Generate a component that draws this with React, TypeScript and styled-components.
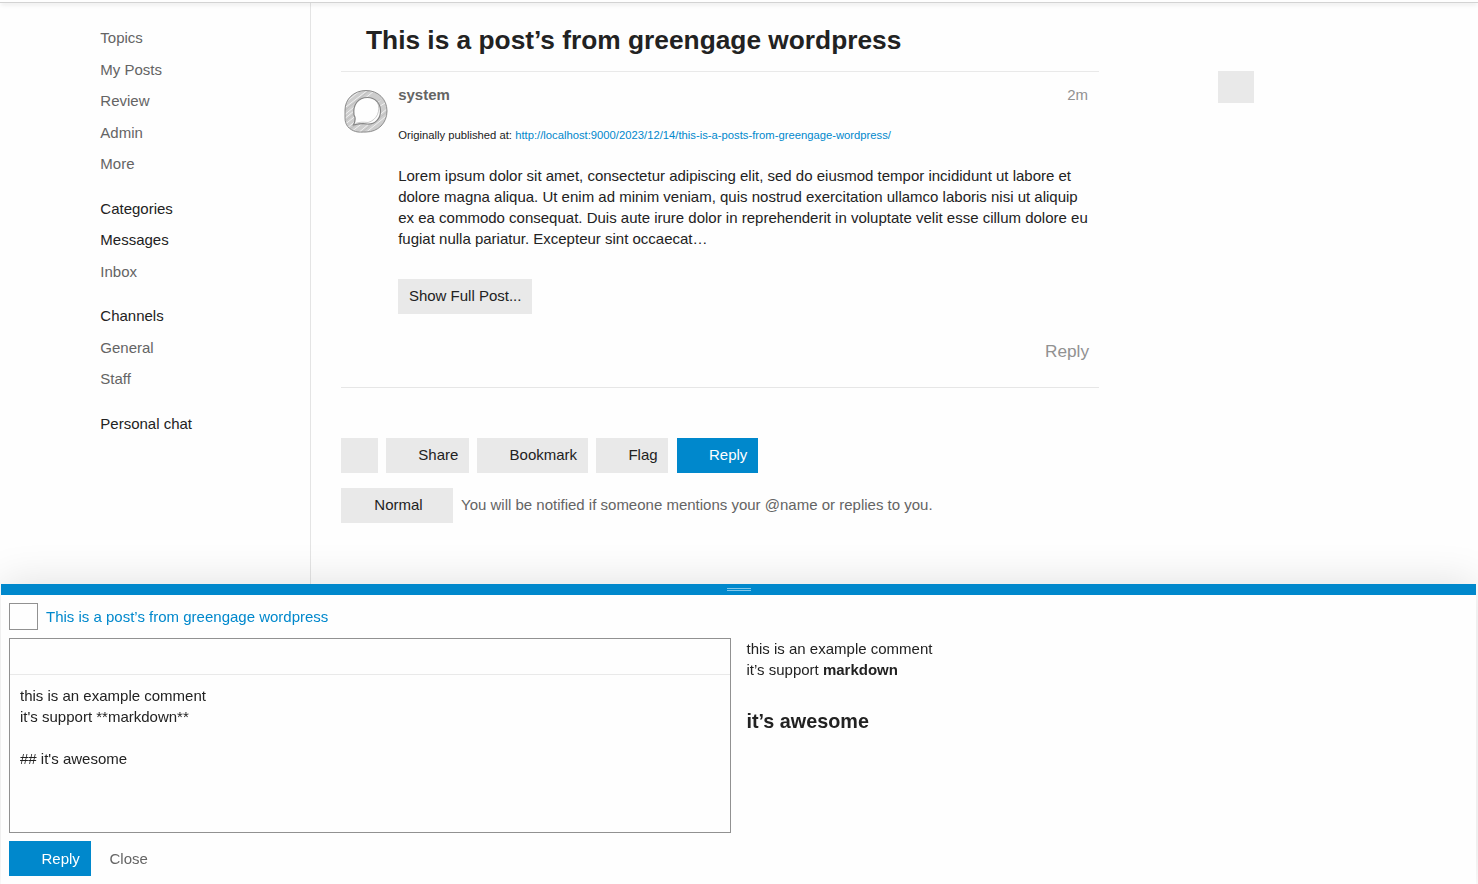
import React from "react";
import styled, { createGlobalStyle } from "styled-components";

const GlobalStyle = createGlobalStyle`
  *, *::before, *::after { box-sizing: border-box; }
  body {
    margin: 0;
    background: #fefefe;
    color: #222;
    font: 15px/21px "Liberation Sans", Arial, sans-serif;
    overflow: hidden;
  }
  h1, h2, p { margin: 0; }
  a { color: #0088cc; text-decoration: none; }
`;

const Page = styled.div`
  height: 884px;
  display: flex;
  flex-direction: column;
`;

const Header = styled.header`
  flex: none;
  height: 3px;
  background: #fefefe;
  box-shadow: 0 2px 4px -1px rgba(0, 0, 0, 0.25);
  border-bottom: 1px solid #d3d3d3;
  position: relative;
  z-index: 1;
`;

const Body = styled.div`
  flex: 1;
  display: grid;
  grid-template-columns: 311px 1fr;
`;

const Sidebar = styled.nav`
  border-right: 1px solid #e4e4e4;
  padding: 19px 0 0 100.3px;
`;

const NavGroup = styled.div<{ $flush?: boolean }>`
  margin-bottom: ${(p) => (p.$flush ? 0 : "13.2px")};
`;

const NavItem = styled.div<{ $heading?: boolean }>`
  height: 31.5px;
  line-height: 31.5px;
  color: ${(p) => (p.$heading ? "#222" : "#646464")};
`;

const Main = styled.main`
  padding-left: 30px;
  display: flex;
`;

const Column = styled.div`
  width: 758px;
`;

const Title = styled.h1`
  height: 68px;
  padding: 19px 0 0 25px;
  font-size: 26.3px;
  line-height: 36px;
`;

const Post = styled.article`
  display: grid;
  grid-template-columns: 57.2px 1fr;
  height: 317px;
  border-top: 1px solid #e9e9e9;
  border-bottom: 1px solid #e6e6e6;
`;

const Avatar = styled.svg`
  width: 45px;
  height: 45px;
  margin: 17px 0 0 2px;
`;

const PostContent = styled.div`
  padding: 12px 10px 0 0;
  display: flex;
  flex-direction: column;
  align-items: flex-start;
`;

const Meta = styled.div`
  align-self: stretch;
  display: flex;
  justify-content: space-between;
  padding-right: 1px;
  color: #919191;

  b { color: #646464; }
`;

const Source = styled.p`
  margin-top: 20px;
  font-size: 11.25px;
  line-height: 20px;
`;

const Excerpt = styled.p`
  margin-top: 20px;
  white-space: nowrap;
`;

const Button = styled.button<{ $primary?: boolean; $width: number; $indent?: number; $drop?: boolean }>`
  flex: none;
  width: ${(p) => p.$width}px;
  height: 35px;
  padding: 0 0 ${(p) => (p.$drop ? 0 : 2)}px ${(p) => p.$indent ?? 32.3}px;
  border: 0;
  text-align: left;
  white-space: nowrap;
  font: inherit;
  line-height: 20px;
  color: ${(p) => (p.$primary ? "#fff" : "#222")};
  background: ${(p) => (p.$primary ? "#0088cc" : "#e9e9e9")};
`;

const ExpandSlot = styled.div`
  margin-top: 30px;
  height: 35px;
`;

const PostReply = styled.span`
  align-self: flex-end;
  margin-top: 27px;
  color: #919191;
  font-size: 17.23px;
`;

const Actions = styled.div`
  display: flex;
  gap: 8px;
  margin-top: 50px;

  button:last-child { margin-left: 1px; }
`;

const Notifications = styled.div`
  display: flex;
  align-items: center;
  gap: 8px;
  margin-top: 15px;
  color: #646464;

  span { padding-bottom: 2px; }
`;

const TimelineButton = styled.div`
  width: 36px;
  height: 32px;
  margin: 68px 0 0 119px;
  background: #e9e9e9;
`;

const Composer = styled.section`
  position: fixed;
  left: 1px;
  right: 2px;
  bottom: 0;
  height: 300px;
  display: flex;
  flex-direction: column;
  background: #fefefe;
  box-shadow: 0 -1px 40px rgba(0, 0, 0, 0.12);
`;

const Grip = styled.div`
  flex: none;
  height: 11px;
  display: flex;
  justify-content: center;
  padding: 4px 0;
  background: #0088cc;

  &::before {
    content: "";
    width: 24px;
    height: 3px;
    border: solid #83c7e9;
    border-width: 1px 0;
  }
`;

const ComposerTitle = styled.div`
  display: flex;
  gap: 8px;
  margin: 8px 8px 0;
  height: 27px;
  line-height: 27px;
`;

const ActionBox = styled.span`
  width: 29px;
  border: 1px solid #919191;
`;

const Panes = styled.div`
  display: flex;
  gap: 15.5px;
  margin: 8px 8px 0;
  height: 195px;
`;

const Editor = styled.div`
  width: 722px;
  border: 1px solid #919191;
`;

const Toolbar = styled.div`
  height: 36px;
  border-bottom: 1px solid #e9e9e9;
`;

const Draft = styled.div`
  padding: 10px;
  white-space: pre;
`;

const Preview = styled.div`
  h2 {
    margin-top: 27px;
    font-size: 19.79px;
    line-height: 28px;
  }
`;

const Submit = styled.div`
  display: flex;
  align-items: center;
  margin: 8px 8px 0;

  span {
    margin-left: 18.5px;
    color: #646464;
  }
`;

const navigation = [
  { heading: "", items: ["Topics", "My Posts", "Review", "Admin", "More"] },
  { heading: "Categories", items: [], flush: true },
  { heading: "Messages", items: ["Inbox"] },
  { heading: "Channels", items: ["General", "Staff"] },
  { heading: "Personal chat", items: [] },
];

const bubble =
  "M23 1.500C35 1.500 44 10 44 22C44 34 35 43 23 43C19 43 16 43.500 12.500 42.500C6 40.500 2 36 2 29V21C2 10 11 1.500 23 1.500Z";
const bubbleHole =
  "M24.500 8.500C32 8.500 37.500 14.500 37.500 22C37.500 30 32 35.500 24.500 35C20 34 16 34.500 10.500 36C12.500 32 13 29 11 26C9.500 16 15 8.500 24.500 8.500Z";

function SystemAvatar() {
  return (
    <Avatar viewBox="0 0 45 45">
      <defs>
        <clipPath id="ring">
          <path d={bubble} />
        </clipPath>
      </defs>
      <g clipPath="url(#ring)">
        <path d={bubble} fill="#cdcdcd" />
        <path
          d="M-2 17L23-3M-1 21L30-3M0 27L36-2M0 31L17 17M0 37L20 21M3 40L15 30M8 43L25 30M14 45L45 19M21 45L47 24M28 45L47 31M30 17L45 5M29 22L47 11"
          stroke="#f0f0f0"
          strokeWidth="1"
        />
        <path
          d="M0 23L27 1M0 34L12 24M2 43L19 32M18 44L45 22M29 15L43 8"
          stroke="#b8b8b8"
          strokeWidth=".7"
        />
      </g>
      <path d={bubble} fill="none" stroke="#8c8c8c" strokeWidth="1" />
      <path d={bubbleHole} fill="#fefefe" stroke="#858585" strokeWidth="1.200" />
      <path
        d="M34.500 13C38 22 34 31 25 33.500C20 33 16 33 12.500 34.500"
        fill="none"
        stroke="#aaa"
        strokeWidth=".6"
      />
    </Avatar>
  );
}

export default function App() {
  return (
    <>
      <GlobalStyle />
      <Page>
        <Header />
        <Body>
          <Sidebar>
            {navigation.map(({ heading, items, flush }) => (
              <NavGroup key={heading} $flush={flush}>
                {heading && <NavItem $heading>{heading}</NavItem>}
                {items.map((item) => (
                  <NavItem key={item}>{item}</NavItem>
                ))}
              </NavGroup>
            ))}
          </Sidebar>
          <Main>
            <Column>
              <Title>This is a post’s from greengage wordpress</Title>
              <Post>
                <SystemAvatar />
                <PostContent>
                  <Meta>
                    <b>system</b>
                    <span>2m</span>
                  </Meta>
                  <Source>
                    Originally published at:{" "}
                    <a href="#post">http://localhost:9000/2023/12/14/this-is-a-posts-from-greengage-wordpress/</a>
                  </Source>
                  <Excerpt>
                    Lorem ipsum dolor sit amet, consectetur adipiscing elit, sed do eiusmod tempor incididunt ut labore et
                    <br />
                    dolore magna aliqua. Ut enim ad minim veniam, quis nostrud exercitation ullamco laboris nisi ut aliquip
                    <br />
                    ex ea commodo consequat. Duis aute irure dolor in reprehenderit in voluptate velit esse cillum dolore eu
                    <br />
                    fugiat nulla pariatur. Excepteur sint occaecat…
                  </Excerpt>
                  <ExpandSlot>
                    <Button $width={134} $indent={10.7}>Show Full Post...</Button>
                  </ExpandSlot>
                  <PostReply>Reply</PostReply>
                </PostContent>
              </Post>
              <Actions>
                <Button $width={37} aria-label="Admin actions" />
                <Button $width={83}>Share</Button>
                <Button $width={111} $indent={32.6}>Bookmark</Button>
                <Button $width={72} $indent={32.4}>Flag</Button>
                <Button $width={81} $primary $indent={32}>Reply</Button>
              </Actions>
              <Notifications>
                <Button $width={112} $indent={33.3}>Normal</Button>
                <span>You will be notified if someone mentions your @name or replies to you.</span>
              </Notifications>
            </Column>
            <TimelineButton />
          </Main>
        </Body>
      </Page>
      <Composer>
        <Grip />
        <ComposerTitle>
          <ActionBox />
          <a href="#post">This is a post’s from greengage wordpress</a>
        </ComposerTitle>
        <Panes>
          <Editor>
            <Toolbar />
            <Draft>{"this is an example comment\nit's support **markdown**\n\n## it's awesome"}</Draft>
          </Editor>
          <Preview>
            <p>
              this is an example comment
              <br />
              it’s support <b>markdown</b>
            </p>
            <h2>it’s awesome</h2>
          </Preview>
        </Panes>
        <Submit>
          <Button $width={82} $primary $indent={32.5} $drop>Reply</Button>
          <span>Close</span>
        </Submit>
      </Composer>
    </>
  );
}
